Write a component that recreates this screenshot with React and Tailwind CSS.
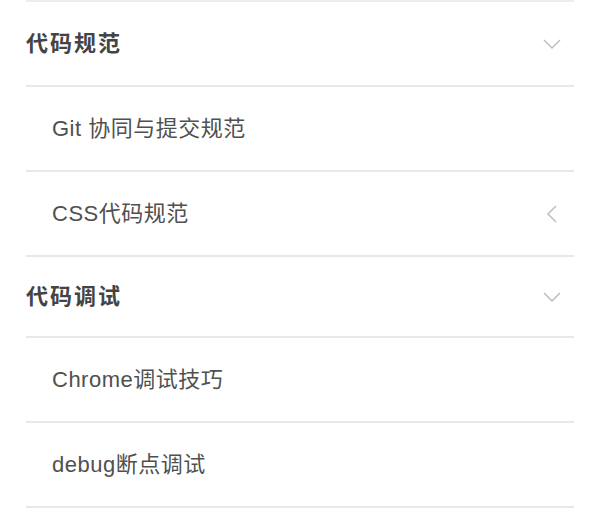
import React from 'react'

const font = { fontFamily: '"Liberation Sans", "Noto Sans CJK SC", sans-serif' }

function ChevronDown() {
  return (
    <svg width="20" height="12" viewBox="0 0 20 12" className="mr-[12px]">
      <path d="M2 2 L10 10 L18 2" fill="none" stroke="#bdbdbd" strokeWidth="1.5" />
    </svg>
  )
}

function ChevronLeft() {
  return (
    <svg width="12" height="20" viewBox="0 0 12 20" className="mr-[16px]">
      <path d="M10 2 L2 10 L10 18" fill="none" stroke="#bdbdbd" strokeWidth="1.5" />
    </svg>
  )
}

const groups = [
  { title: '代码规范', h: 'h-[85px]', items: [
    { label: 'Git 协同与提交规范' },
    { label: 'CSS代码规范', arrow: true },
  ] },
  { title: '代码调试', h: 'h-[81px]', items: [
    { label: 'Chrome调试技巧' },
    { label: 'debug断点调试' },
  ] },
]

export default function App() {
  return (
    <div className="w-[600px] h-[511px] bg-white overflow-hidden" style={font}>
      <div className="mx-[26px] border-t-2 border-[#ececec]">
        {groups.map(g => (
          <div key={g.title}>
            <div className={`${g.h} flex items-center justify-between border-b-2 border-[#e8e8e8]`}>
              <span className="text-[22px] font-bold text-[#444] tracking-[2px]">{g.title}</span>
              <ChevronDown />
            </div>
            {g.items.map(it => (
              <div key={it.label} className="h-[85px] flex items-center justify-between border-b-2 border-[#e8e8e8] pl-[26px]">
                <span className="text-[22px] text-[#505050] tracking-[0.5px]">{it.label}</span>
                {it.arrow && <ChevronLeft />}
              </div>
            ))}
          </div>
        ))}
      </div>
    </div>
  )
}
